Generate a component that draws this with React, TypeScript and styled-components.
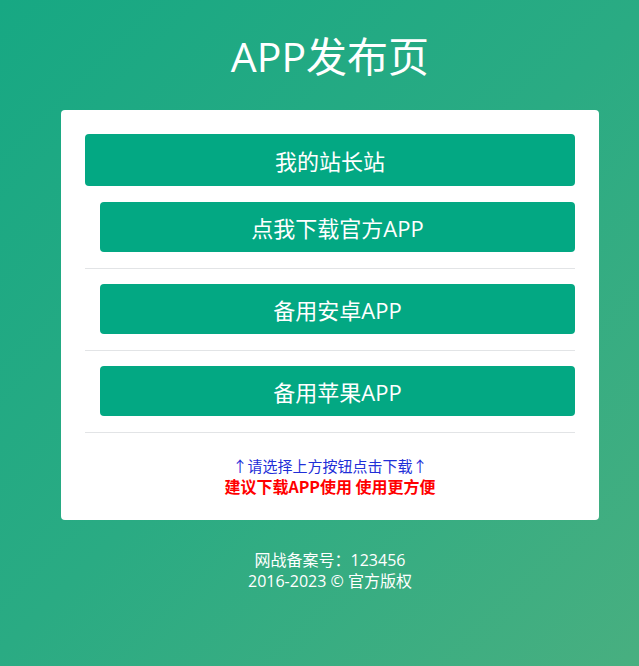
import React from "react";
import styled, { createGlobalStyle } from "styled-components";

const GlobalStyle = createGlobalStyle`
  html, body {
    margin: 0;
    padding: 0;
  }
  body {
    min-height: 666px;
    background: linear-gradient(135deg, #17a883 0%, #2aab83 50%, #48af80 100%);
    font-family: "Open Sans", "Noto Sans CJK SC", sans-serif;
    color: #fff;
  }
`

const Page = styled.div`
  padding: 28px 0 40px 61px;
  width: 538px;
`

const Title = styled.h1`
  margin: 0 0 26px;
  font-size: 41px;
  font-weight: 400;
  line-height: 56px;
  text-align: center;
  color: #fff;
`

const Card = styled.div`
  background: #fff;
  border-radius: 4px;
  padding: 24px 24px 23px;
`

const Button = styled.a<{ $indent?: boolean }>`
  display: flex;
  align-items: center;
  justify-content: center;
  height: ${p => (p.$indent ? "50px" : "52px")};
  margin-left: ${p => (p.$indent ? "15px" : "0")};
  background-color: #03a883;
  color: #fff;
  border-radius: 4px;
  font-size: 22px;
  text-decoration: none;
  cursor: pointer;
`

const Item = styled.div`
  padding: 16px 0;
  border-bottom: 1px solid #e2e4e6;

  & + & {
    padding-top: 15px;
  }
`

const Notice = styled.div`
  margin-top: 22px;
  text-align: center;
  font-family: "Noto Sans CJK SC", sans-serif;
  font-size: 15px;
  line-height: 21px;
`

const Tip = styled.div`
  color: #1f2fd8;
`

const Warn = styled.div`
  color: #ff0000;
  font-size: 16px;
  font-weight: 700;
`

const Footer = styled.div`
  margin-top: 30px;
  text-align: center;
  font-size: 16px;
  line-height: 21px;
  color: #fff;
`

const App = () => {
    return (
        <>
            <GlobalStyle />
            <Page>
                <Title>APP发布页</Title>
                <Card>
                    <Button>我的站长站</Button>
                    <Item><Button $indent>点我下载官方APP</Button></Item>
                    <Item><Button $indent>备用安卓APP</Button></Item>
                    <Item><Button $indent>备用苹果APP</Button></Item>
                    <Notice>
                        <Tip>↑请选择上方按钮点击下载↑</Tip>
                        <Warn>建议下载APP使用 使用更方便</Warn>
                    </Notice>
                </Card>
                <Footer>
                    <div>网战备案号：123456</div>
                    <div>2016-2023 © 官方版权</div>
                </Footer>
            </Page>
        </>
    )
}

export default App;
